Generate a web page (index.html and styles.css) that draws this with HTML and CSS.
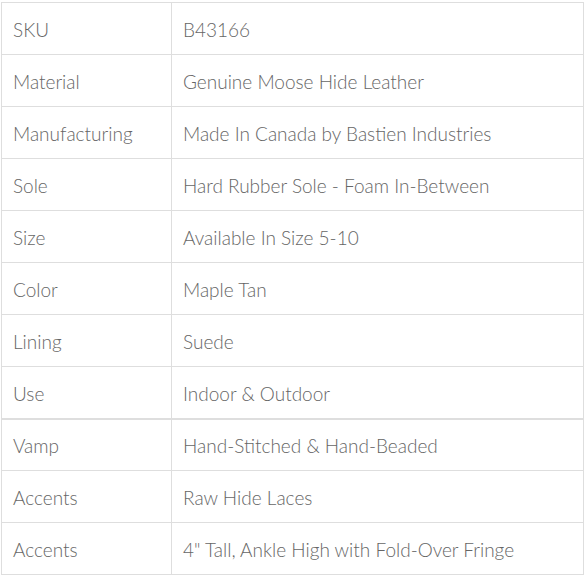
FILE: index.html
```html
<!DOCTYPE html>
<html>
<head>
<meta charset="utf-8">
<link rel="stylesheet" href="styles.css">
</head>
<body>
<table class="specs">
<tbody>
<tr><td class="key">SKU</td><td class="val">B43166</td></tr>
<tr><td class="key">Material</td><td class="val">Genuine Moose Hide Leather</td></tr>
<tr><td class="key">Manufacturing</td><td class="val">Made In Canada by Bastien Industries</td></tr>
<tr><td class="key">Sole</td><td class="val">Hard Rubber Sole - Foam In-Between</td></tr>
<tr><td class="key">Size</td><td class="val">Available In Size 5-10</td></tr>
<tr><td class="key">Color</td><td class="val">Maple Tan</td></tr>
<tr><td class="key">Lining</td><td class="val">Suede</td></tr>
<tr class="split"><td class="key">Use</td><td class="val">Indoor &amp; Outdoor</td></tr>
<tr><td class="key">Vamp</td><td class="val">Hand-Stitched &amp; Hand-Beaded</td></tr>
<tr><td class="key">Accents</td><td class="val">Raw Hide Laces</td></tr>
<tr><td class="key">Accents</td><td class="val">4" Tall, Ankle High with Fold-Over Fringe</td></tr>
</tbody>
</table>
</body>
</html>
```
FILE: styles.css
```css
html, body {
  margin: 0;
  padding: 0;
  background: #fff;
}
body {
  padding: 2px 0 0 1px;
  font-family: Lato, "Liberation Sans", sans-serif;
  font-weight: 300;
  color: #666;
}
.specs {
  border-collapse: collapse;
  width: 583px;
  font-size: 19px;
}
.specs td {
  border: 1px solid #dedede;
  height: 52px;
  padding: 2px 11px 0;
  vertical-align: middle;
  box-sizing: border-box;
}
.specs .key {
  width: 170px;
}
.specs .split td {
  border-bottom: 2px solid #dedede;
}
```
